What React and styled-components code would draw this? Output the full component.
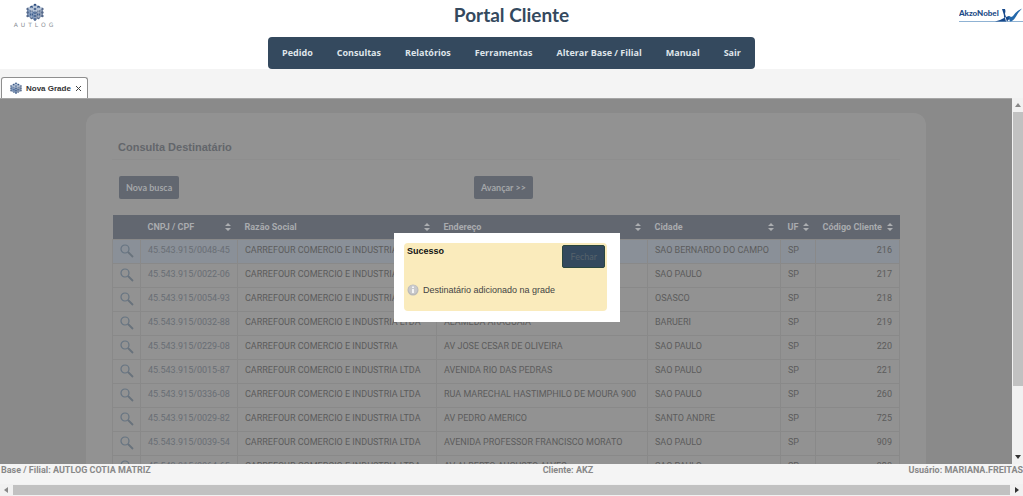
import React from 'react';
import styled, { createGlobalStyle, ThemeProvider } from 'styled-components';

const theme = {
  navy: '#34495e',
  chrome: '#f4f4f4',
  thumb: '#c1c1c1',
  backdrop: '#8a8a8a',
  panel: '#929292',
  slate: '#626770',
  text: '#5c5c5c',
  sans: "'Liberation Sans', Arial, sans-serif",
  grid: "Roboto, 'Liberation Sans', sans-serif",
  brand: "'Open Sans', 'Noto Sans', sans-serif",
  title: "'Lato', 'Open Sans', sans-serif",
};

const GlobalStyle = createGlobalStyle`
  * {
    box-sizing: border-box;
  }

  body {
    margin: 0;
    overflow: hidden;
  }
`;

const Page = styled.div`
  display: flex;
  flex-direction: column;
  height: 100vh;
  background: #fff;
  font-family: ${props => props.theme.sans};
  font-size: 9px;
`;

const Header = styled.header`
  display: flex;
  flex-direction: column;
  align-items: center;
`;

const HeaderTop = styled.div`
  display: grid;
  grid-template-columns: 1fr auto 1fr;
  align-items: center;
  width: 100%;
  height: 30px;
  margin-bottom: 7px;
`;

const BrandLink = styled.a`
  display: flex;
  justify-self: ${props => (props.$end ? 'end' : 'start')};
  padding-left: ${props => (props.$end ? 0 : '13px')};
  text-decoration: none;
`;

const Title = styled.h1`
  margin: 0;
  color: #34495e;
  font-family: ${props => props.theme.title};
  font-size: 19px;
  font-weight: bold;
  line-height: 30px;
`;

const Nav = styled.nav`
  display: flex;
  align-items: center;
  gap: 24px;
  height: 32px;
  padding: 0 14px;
  border-radius: 4px;
  background: ${props => props.theme.navy};
`;

const NavLink = styled.a`
  color: #dfe5ea;
  font-family: ${props => props.theme.brand};
  font-size: 9px;
  font-weight: bold;
  line-height: 14px;
  text-decoration: none;
  white-space: nowrap;
`;

const TabStrip = styled.div`
  display: flex;
  align-items: flex-end;
  height: 29px;
  padding-left: 1px;
  background: ${props => props.theme.chrome};
`;

const Tab = styled.div`
  display: flex;
  align-items: center;
  gap: 4px;
  height: 21px;
  padding: 0 5px 0 8px;
  border: 1px solid #8f8f8f;
  border-bottom: 0;
  border-radius: 3px 3px 0 0;
  background: #fff;
  color: #333;
  font-size: 8px;
  font-weight: bold;
`;

const TabClose = styled.button`
  display: flex;
  padding: 0;
  border: 0;
  background: none;
`;

const Workspace = styled.div`
  display: flex;
  flex: 1;
  min-height: 0;
`;

const Stage = styled.main`
  position: relative;
  flex: 1;
  min-width: 0;
  overflow: hidden;
  padding: 14px 86px 0;
  border-top: 1px solid #a5a5a5;
  background: ${props => props.theme.backdrop};
`;

const Panel = styled.section`
  padding: 26px;
  border-radius: 12px;
  background: ${props => props.theme.panel};
`;

const PanelTitle = styled.h2`
  margin: 0;
  padding: 0 6px 4px;
  border-bottom: 1px solid #8e8e8e;
  color: #63666b;
  font-size: 11px;
  font-weight: bold;
  line-height: 16px;
`;

const Actions = styled.div`
  display: grid;
  grid-template-columns: 5fr 6fr;
  justify-items: start;
  padding: 16px 0 16px 7px;
`;

const ActionButton = styled.button`
  height: 23px;
  padding: 0 7px;
  border: 0;
  border-radius: 2px;
  background: ${props => props.theme.slate};
  color: #a4a6a9;
  font-family: ${props => props.theme.title};
  font-size: 9px;
  font-weight: bold;
`;

const Table = styled.table`
  width: 100%;
  border-collapse: collapse;
  table-layout: fixed;
  font-family: ${props => props.theme.grid};
`;

const Col = styled.col`
  width: ${props => props.$width}px;
`;

const HeadCell = styled.th`
  height: 24px;
  padding: 0 7px;
  background: ${props => props.theme.slate};
  color: #a9abae;
  font-size: 9px;
  text-align: left;
  white-space: nowrap;
`;

const HeadLabel = styled.span`
  display: flex;
  align-items: center;
  justify-content: space-between;
`;

const Row = styled.tr`
  background: ${props => (props.$active ? '#8a9098' : 'transparent')};
`;

const Cell = styled.td`
  height: 24px;
  padding: 0 7px 2px;
  border: 1px solid #898989;
  color: ${props => props.theme.text};
  font-size: 9px;
  line-height: 12px;
  text-align: ${props => (props.$numeric ? 'right' : 'left')};
  white-space: nowrap;
`;

const RecordLink = styled.a`
  color: #696e75;
  text-decoration: none;
`;

const IconButton = styled.button`
  display: block;
  padding: 4px 0 0;
  border: 0;
  background: none;
`;

const Overlay = styled.div`
  position: absolute;
  inset: 0;
  display: flex;
  align-items: center;
  justify-content: center;
  padding: 0 0 8px 2px;
`;

const Dialog = styled.div`
  width: 226px;
  padding: 10px 13px 11px 10px;
  background: #fff;
`;

const Notice = styled.div`
  padding: 2px 2px 14px 3px;
  border-radius: 4px;
  background: #faebbc;
`;

const NoticeHead = styled.div`
  display: flex;
  align-items: flex-start;
  justify-content: space-between;
  margin-bottom: 15px;
`;

const NoticeTitle = styled.h3`
  margin: 0;
  color: #111;
  font-size: 9px;
  line-height: 12px;
`;

const CloseButton = styled.button`
  height: 23px;
  padding: 0 7px;
  border: 1px solid #2a4640;
  border-radius: 2px;
  background: ${props => props.theme.navy};
  color: #56626b;
  font-family: ${props => props.theme.title};
  font-size: 9px;
`;

const Message = styled.p`
  display: flex;
  align-items: center;
  gap: 4px;
  margin: 0;
  color: #444;
  font-size: 9px;
  line-height: 14px;
`;

const VerticalBar = styled.div`
  display: flex;
  flex-direction: column;
  align-items: center;
  width: 11px;
  padding: 4px 0;
  background: #f1f1f1;
`;

const VerticalTrack = styled.div`
  flex: 1;
  width: 10px;
  margin: 4px 0;
`;

const VerticalThumb = styled.div`
  height: 81%;
  background: ${props => props.theme.thumb};
`;

const StatusBar = styled.footer`
  display: grid;
  grid-template-columns: 53% 1fr auto;
  padding: 0 0 8px 1px;
  background: ${props => props.theme.chrome};
  color: #888;
  font-family: ${props => props.theme.grid};
  font-weight: bold;
  line-height: 12px;
  white-space: nowrap;
`;

const HorizontalBar = styled.div`
  display: flex;
  align-items: center;
  gap: 4px;
  height: 12px;
  padding: 0 3px;
  background: #f1f1f1;
`;

const HorizontalThumb = styled.div`
  flex: 1;
  height: 10px;
  background: ${props => props.theme.thumb};
`;

const menu = [
  'Pedido',
  'Consultas',
  'Relatórios',
  'Ferramentas',
  'Alterar Base / Filial',
  'Manual',
  'Sair',
];

const columns = [
  { label: 'CNPJ / CPF', width: 97 },
  { label: 'Razão Social', width: 199 },
  { label: 'Endereço', width: 211 },
  { label: 'Cidade', width: 133 },
  { label: 'UF', width: 35 },
  { label: 'Código Cliente', width: 84 },
];

const LTDA = 'CARREFOUR COMERCIO E INDUSTRIA LTDA';

const records = [
  ['45.543.915/0048-45', LTDA, 'AVENIDA', 'SAO BERNARDO DO CAMPO', 'SP', '216'],
  ['45.543.915/0022-06', LTDA, 'AVENIDA', 'SAO PAULO', 'SP', '217'],
  ['45.543.915/0054-93', LTDA, 'AVENIDA', 'OSASCO', 'SP', '218'],
  ['45.543.915/0032-88', LTDA, 'ALAMEDA ARAGUAIA', 'BARUERI', 'SP', '219'],
  ['45.543.915/0229-08', 'CARREFOUR COMERCIO E INDUSTRIA', 'AV JOSE CESAR DE OLIVEIRA', 'SAO PAULO', 'SP', '220'],
  ['45.543.915/0015-87', LTDA, 'AVENIDA RIO DAS PEDRAS', 'SAO PAULO', 'SP', '221'],
  ['45.543.915/0336-08', LTDA, 'RUA MARECHAL HASTIMPHILO DE MOURA 900', 'SAO PAULO', 'SP', '260'],
  ['45.543.915/0029-82', LTDA, 'AV PEDRO AMERICO', 'SANTO ANDRE', 'SP', '725'],
  ['45.543.915/0039-54', LTDA, 'AVENIDA PROFESSOR FRANCISCO MORATO', 'SAO PAULO', 'SP', '909'],
  ['45.543.915/0064-65', LTDA, 'AV ALBERTO AUGUSTO ALVES', 'SAO PAULO', 'SP', '928'],
];

const Cube = ({ size }) => (
  <svg width={size} height={size} viewBox="0 0 18 18" aria-hidden="true">
    <path d="M9 1l8 4v8l-8 4-8-4V5z" fill="#b9c6d8" />
    <path d="M9 9v8l-8-4V5z" fill="#7f98bb" />
    <path d="M9 9l8-4v8l-8 4z" fill="#8d9cb3" />
    <g fill="#2f4f80">
      <circle cx="9" cy="2" r="1.3" />
      <circle cx="5.5" cy="4" r="1.3" />
      <circle cx="12.5" cy="4" r="1.3" />
      <circle cx="9" cy="6" r="1.3" />
      <circle cx="9" cy="9.5" r="1.5" />
      <circle cx="9" cy="13" r="1.3" />
      <circle cx="5.5" cy="11.5" r="1.3" />
      <circle cx="12.5" cy="11.5" r="1.3" />
      <circle cx="9" cy="16.4" r="1.3" />
    </g>
    <g fill="#54688a">
      <circle cx="1.6" cy="6" r="1.2" />
      <circle cx="1.6" cy="9.5" r="1.2" />
      <circle cx="1.6" cy="13" r="1.2" />
      <circle cx="16.4" cy="6" r="1.2" />
      <circle cx="16.4" cy="9.5" r="1.2" />
      <circle cx="16.4" cy="13" r="1.2" />
      <circle cx="5.5" cy="15" r="1.2" />
      <circle cx="12.5" cy="15" r="1.2" />
      <circle cx="5.5" cy="8" r="1.2" />
      <circle cx="12.5" cy="8" r="1.2" />
    </g>
    <path
      d="M9 2v15M2 5.500l7 3.500 7-3.500M5.500 4v11M12.500 4v11"
      fill="none"
      stroke="#dfe7f0"
      strokeWidth="0.4"
    />
  </svg>
);

const LogoBox = styled.span`
  display: flex;
  flex-direction: column;
  align-items: center;
  width: 44px;
`;

const LogoName = styled.span`
  color: #8b8f96;
  font-family: 'DejaVu Sans', sans-serif;
  font-size: 6px;
  line-height: 7px;
  letter-spacing: 3px;
`;

const PartnerLogo = () => (
  <svg width="64" height="18" viewBox="0 0 64 18" role="img" aria-label="AkzoNobel">
    <text
      x="0"
      y="10"
      fill="#1a4a86"
      fontFamily="'Lato', 'Open Sans', sans-serif"
      fontSize="8"
      fontWeight="900"
    >
      AkzoNobel
    </text>
    <path d="M0 15.500h64" stroke="#8fb2d3" />
    <path d="M43 3h3q1 2 0 5l1 3 3-1 2 1-4 4.500H36q5-1 9-3.500 0-4-1-6z" fill="#16488a" />
    <path d="M49 10q3 2 5 0 3-5 9-7.500-4 4-6 8-3 5-6 5z" fill="#2368ab" />
    <path d="M46 11l1.500 4.500" stroke="#fff" strokeWidth="0.8" />
  </svg>
);

const SortIcon = () => (
  <svg width="6" height="8" viewBox="0 0 6 8" aria-hidden="true">
    <path d="M3 0l3 3H0zM3 8L0 5h6z" fill="#acaeb1" />
  </svg>
);

const SearchIcon = () => (
  <svg width="14" height="14" viewBox="0 0 14 14" fill="none" aria-hidden="true">
    <circle cx="5" cy="5" r="4" stroke="#667482" strokeWidth="1.200" />
    <path d="M8 8l5 5" stroke="#68727c" strokeWidth="1.800" />
  </svg>
);

const InfoIcon = () => (
  <svg width="12" height="12" viewBox="0 0 12 12" aria-hidden="true">
    <circle cx="6" cy="6" r="5.500" fill="#b9b9b9" />
    <circle cx="6" cy="5.500" r="4.500" fill="#c9c9cb" />
    <path d="M6 5v4M6 2.500v1.500" stroke="#fff" strokeWidth="1.600" />
  </svg>
);

const arrows = {
  up: 'M3 1l3 4H0z',
  down: 'M0 1h6L3 5z',
  left: 'M5 0v6L1 3z',
  right: 'M1 0v6l4-3z',
};

const Arrow = ({ to, color = '#333' }) => (
  <svg width="6" height="6" viewBox="0 0 6 6" aria-hidden="true">
    <path d={arrows[to]} fill={color} />
  </svg>
);

const DataTable = () => (
  <Table>
    <colgroup>
      <Col $width={28} />
      {columns.map(({ label, width }) => (
        <Col key={label} $width={width} />
      ))}
    </colgroup>
    <thead>
      <tr>
        <HeadCell />
        {columns.map(({ label }) => (
          <HeadCell key={label} scope="col">
            <HeadLabel>
              {label}
              <SortIcon />
            </HeadLabel>
          </HeadCell>
        ))}
      </tr>
    </thead>
    <tbody>
      {records.map(([cnpj, name, address, city, uf, code], index) => (
        <Row key={cnpj} $active={index === 0}>
          <Cell>
            <IconButton type="button" aria-label={`Consultar ${cnpj}`}>
              <SearchIcon />
            </IconButton>
          </Cell>
          <Cell>
            <RecordLink href="#registro">{cnpj}</RecordLink>
          </Cell>
          <Cell>{name}</Cell>
          <Cell>{address}</Cell>
          <Cell>{city}</Cell>
          <Cell>{uf}</Cell>
          <Cell $numeric>{code}</Cell>
        </Row>
      ))}
    </tbody>
  </Table>
);

const SuccessDialog = () => (
  <Overlay>
    <Dialog role="dialog" aria-labelledby="dialog-title">
      <Notice>
        <NoticeHead>
          <NoticeTitle id="dialog-title">Sucesso</NoticeTitle>
          <CloseButton type="button">Fechar</CloseButton>
        </NoticeHead>
        <Message>
          <InfoIcon />
          Destinatário adicionado na grade
        </Message>
      </Notice>
    </Dialog>
  </Overlay>
);

const App = () => (
  <ThemeProvider theme={theme}>
    <GlobalStyle />
    <Page>
      <Header>
        <HeaderTop>
          <BrandLink href="#inicio">
            <LogoBox>
              <Cube size={18} />
              <LogoName>AUTLOG</LogoName>
            </LogoBox>
          </BrandLink>
          <Title>Portal Cliente</Title>
          <BrandLink href="#cliente" $end>
            <PartnerLogo />
          </BrandLink>
        </HeaderTop>
        <Nav>
          {menu.map(item => (
            <NavLink key={item} href="#menu">
              {item}
            </NavLink>
          ))}
        </Nav>
      </Header>

      <TabStrip>
        <Tab>
          <Cube size={12} />
          Nova Grade
          <TabClose type="button" aria-label="Fechar aba">
            <svg width="7" height="7" viewBox="0 0 7 7" aria-hidden="true">
              <path d="M1 1l5 5M6 1L1 6" stroke="#444" />
            </svg>
          </TabClose>
        </Tab>
      </TabStrip>

      <Workspace>
        <Stage>
          <Panel>
            <PanelTitle>Consulta Destinatário</PanelTitle>
            <Actions>
              <ActionButton type="button">Nova busca</ActionButton>
              <ActionButton type="button">Avançar &gt;&gt;</ActionButton>
            </Actions>
            <DataTable />
          </Panel>
          <SuccessDialog />
        </Stage>
        <VerticalBar>
          <Arrow to="up" color="#888" />
          <VerticalTrack>
            <VerticalThumb />
          </VerticalTrack>
          <Arrow to="down" />
        </VerticalBar>
      </Workspace>

      <StatusBar>
        <span>Base / Filial: AUTLOG COTIA MATRIZ</span>
        <span>Cliente: AKZ</span>
        <span>Usuário: MARIANA.FREITAS</span>
      </StatusBar>
      <HorizontalBar>
        <Arrow to="left" color="#888" />
        <HorizontalThumb />
        <Arrow to="right" />
      </HorizontalBar>
    </Page>
  </ThemeProvider>
);

export default App;
